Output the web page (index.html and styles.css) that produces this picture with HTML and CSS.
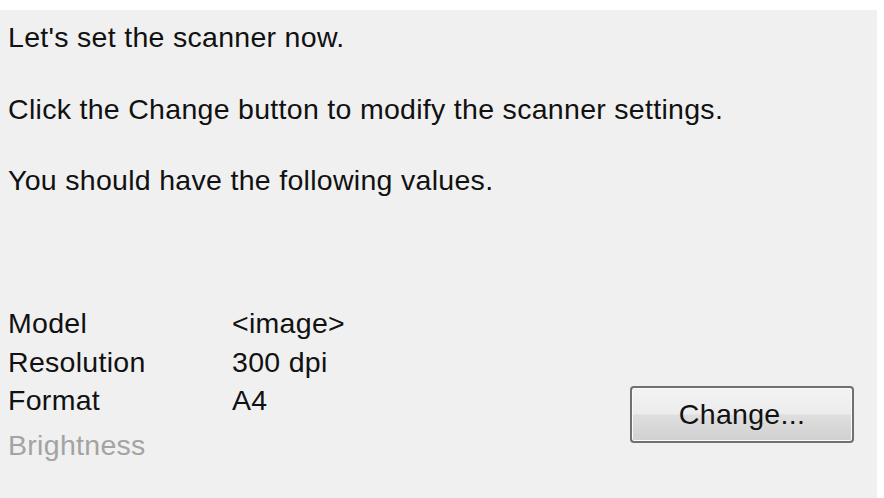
FILE: index.html
```html
<!DOCTYPE html>
<html>
<head>
<meta charset="utf-8">
<link rel="stylesheet" href="styles.css">
</head>
<body>
<div class="panel">
  <p class="line">Let's set the scanner now.</p>
  <p class="line">Click the Change button to modify the scanner settings.</p>
  <p class="line">You should have the following values.</p>
  <div class="settings">
    <div class="table">
      <div class="row"><span class="label">Model</span><span class="value">&lt;image&gt;</span></div>
      <div class="row"><span class="label">Resolution</span><span class="value">300 dpi</span></div>
      <div class="row"><span class="label">Format</span><span class="value">A4</span></div>
      <div class="row disabled"><span class="label">Brightness</span><span class="value"></span></div>
    </div>
    <button class="btn">Change...</button>
  </div>
</div>
</body>
</html>
```
FILE: styles.css
```css
html, body {
  margin: 0;
  padding: 0;
  background: #ffffff;
  height: 100%;
  overflow: hidden;
}
body {
  padding-top: 10px;
  box-sizing: border-box;
  font-family: "Liberation Sans", Arial, sans-serif;
  font-size: 28.5px;
  color: #111;
}
.panel {
  width: 877px;
  height: 488px;
  background: #f0f0f0;
  padding: 11px 0 0 8px;
  box-sizing: border-box;
}
.line {
  margin: 0 0 39.5px 0;
  line-height: 32px;
  letter-spacing: 0.3px;
}
.settings {
  display: flex;
  align-items: flex-start;
  margin-top: 111px;
}
.table {
  display: flex;
  flex-direction: column;
}
.row {
  display: flex;
  line-height: 32px;
  height: 38.5px;
  letter-spacing: 0.3px;
}
.row.disabled {
  color: #a3a3a3;
  margin-top: 6px;
}
.label {
  width: 224px;
}
.btn {
  margin: 79px 23px 0 auto;
  width: 224px;
  height: 57px;
  border: 2px solid #707070;
  border-radius: 4px;
  background: linear-gradient(to bottom, #f3f3f3 0%, #ececec 48%, #dedede 52%, #d0d0d0 100%);
  box-shadow: inset 0 0 0 1px #fbfbfb;
  font-family: "Liberation Sans", Arial, sans-serif;
  font-size: 28.5px;
  color: #111;
  padding: 0;
  letter-spacing: 0.3px;
}
```
